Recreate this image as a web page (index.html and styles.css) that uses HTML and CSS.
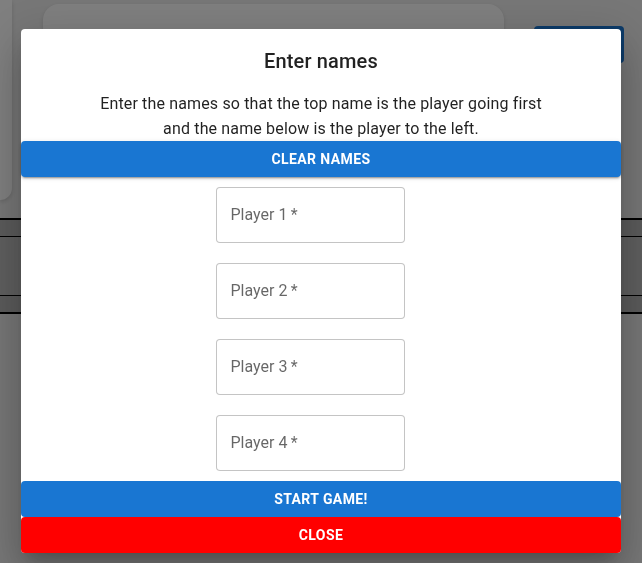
FILE: index.html
```html
<!DOCTYPE html>
<html lang="en">
<head>
<meta charset="utf-8">
<title>Enter names</title>
<link rel="stylesheet" href="styles.css">
</head>
<body>
<div class="page">
  <div class="top">
    <div class="sidecard"></div>
    <div class="panel"></div>
    <div class="action"></div>
  </div>
  <div class="board">
    <div class="board-row"></div>
    <div class="board-mid"></div>
    <div class="board-row"></div>
  </div>
</div>

<div class="overlay">
  <div class="dialog" role="dialog">
    <h2 class="dialog-title">Enter names</h2>
    <p class="dialog-text">Enter the names so that the top name is the player going first<br>and the name below is the player to the left.</p>
    <button class="btn btn-blue btn-raised">Clear names</button>
    <div class="fields">
      <input class="field" type="text" placeholder="Player 1&#8201;*">
      <input class="field" type="text" placeholder="Player 2&#8201;*">
      <input class="field" type="text" placeholder="Player 3&#8201;*">
      <input class="field" type="text" placeholder="Player 4&#8201;*">
    </div>
    <button class="btn btn-blue btn-start">Start game!</button>
    <button class="btn btn-red">Close</button>
  </div>
</div>
</body>
</html>
```

FILE: styles.css
```css
* { box-sizing: border-box; }

html, body {
  margin: 0;
  padding: 0;
  height: 100%;
}

body {
  background: #eeeeee;
  font-family: Roboto, "Liberation Sans", Arial, sans-serif;
  overflow: hidden;
}

.page {
  width: 100%;
}

.top {
  display: flex;
  align-items: flex-start;
  height: 218px;
}

.sidecard {
  width: 12px;
  height: 200px;
  background: #ffffff;
  border-radius: 0 0 16px 0;
  box-shadow: 0 2px 4px rgba(0,0,0,0.15);
}

.panel {
  margin-left: 31px;
  margin-top: 4px;
  width: 461px;
  height: 190px;
  background: #ffffff;
  border-radius: 16px;
  box-shadow: 0 2px 4px rgba(0,0,0,0.12);
}

.action {
  margin-left: 30px;
  margin-top: 26px;
  width: 90px;
  height: 37px;
  background: #1976d2;
  border-radius: 4px;
}

.board {
  border-top: 2px solid #000;
  border-bottom: 2px solid #000;
  background: #b6b6b6;
}

.board-row {
  height: 16px;
}

.board-mid {
  height: 60px;
  border-top: 1px solid #000;
  border-bottom: 1px solid #000;
  background: #bebebe;
}

.overlay {
  position: fixed;
  inset: 0;
  background: rgba(0,0,0,0.5);
  display: flex;
  justify-content: center;
  align-items: flex-start;
  padding-top: 29px;
}

.dialog {
  width: 600px;
  background: #ffffff;
  border-radius: 4px;
  display: flex;
  flex-direction: column;
  align-items: center;
  box-shadow: 0px 11px 15px -7px rgba(0,0,0,0.2),
              0px 24px 38px 3px rgba(0,0,0,0.14),
              0px 9px 46px 8px rgba(0,0,0,0.12);
}

.dialog-title {
  margin: 0;
  padding: 16px 24px 0;
  font-size: 20px;
  font-weight: 500;
  line-height: 32px;
  letter-spacing: 0.0075em;
  color: rgba(0,0,0,0.87);
  text-align: center;
}

.dialog-text {
  margin: 14px 0 0;
  font-size: 16px;
  line-height: 25px;
  letter-spacing: 0.00938em;
  color: rgba(0,0,0,0.87);
  text-align: center;
}

.btn {
  display: block;
  width: 100%;
  height: 36px;
  border: 0;
  border-radius: 4px;
  font-family: Roboto, "Liberation Sans", Arial, sans-serif;
  font-size: 14px;
  font-weight: 700;
  letter-spacing: 0.02857em;
  text-transform: uppercase;
  color: #ffffff;
  padding: 0;
  cursor: pointer;
}

.btn-blue { background: #1976d2; }
.btn-red { background: #ff0000; }

.btn-raised {
  box-shadow: 0px 3px 1px -2px rgba(0,0,0,0.2),
              0px 2px 2px 0px rgba(0,0,0,0.14),
              0px 1px 5px 0px rgba(0,0,0,0.12);
}

.btn-start {
  margin-top: 10px;
}

.fields {
  margin-top: 10px;
  margin-right: 22px;
  display: flex;
  flex-direction: column;
  gap: 20px;
}

.field {
  width: 189px;
  height: 56px;
  border: 1px solid rgba(0,0,0,0.23);
  border-radius: 4px;
  padding: 0 14px 2px;
  font-family: Roboto, "Liberation Sans", Arial, sans-serif;
  font-size: 16px;
  color: rgba(0,0,0,0.87);
  background: #fff;
  outline: none;
}

.field::placeholder {
  color: rgba(0,0,0,0.6);
  opacity: 1;
}
```
